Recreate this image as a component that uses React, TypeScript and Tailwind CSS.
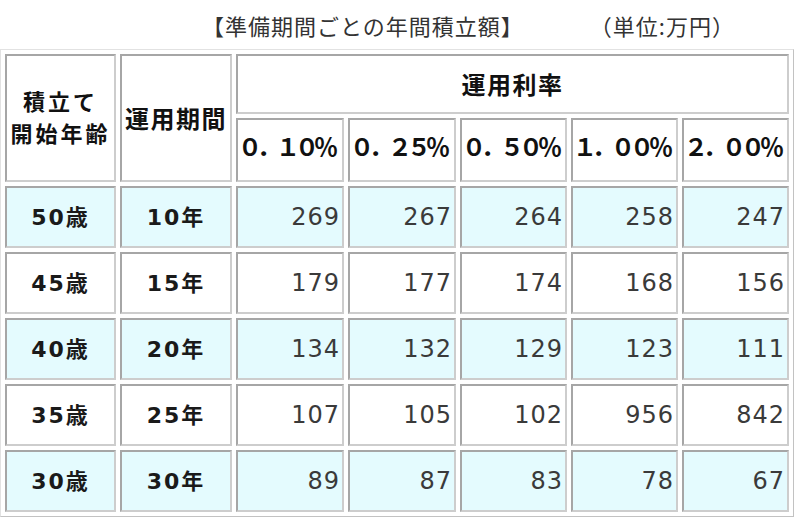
const rates = ["０．１０％", "０．２５％", "０．５０％", "１．００％", "２．００％"];

const rows = [
  { age: "50歳", years: "10年", values: [269, 267, 264, 258, 247] },
  { age: "45歳", years: "15年", values: [179, 177, 174, 168, 156] },
  { age: "40歳", years: "20年", values: [134, 132, 129, 123, 111] },
  { age: "35歳", years: "25年", values: [107, 105, 102, 956, 842] },
  { age: "30歳", years: "30年", values: [89, 87, 83, 78, 67] },
];

const cell =
  "border-2 border-t-[#a6a6a6] border-l-[#a6a6a6] border-r-[#cdcdcd] border-b-[#cdcdcd] p-0 align-middle";

export default function App() {
  return (
    <div className="h-[522px] w-[800px] overflow-hidden bg-white font-['Noto_Sans_CJK_JP',sans-serif] text-[#111]">
      {/* title */}
      <div className="flex h-[49px] items-center pl-[202px] pt-[1px] text-[22px] tracking-[1px] text-[#333]">
        <span>【準備期間ごとの年間積立額】</span>
        <span className="ml-[66px]">（単位:万円）</span>
      </div>

      <table className="w-[794px] table-fixed border-separate border-spacing-[4px] border border-t-[#e2e2e2] border-l-[#e2e2e2] border-r-[#c2c2c2] border-b-[#c2c2c2]">
        <colgroup>
          <col className="w-[111px]" />
          <col className="w-[112px]" />
          <col className="w-[108px]" />
          <col className="w-[108px]" />
          <col className="w-[107px]" />
          <col className="w-[107px]" />
          <col className="w-[107px]" />
        </colgroup>
        <thead>
          <tr>
            <th
              rowSpan={2}
              className={`${cell} pb-[4px] text-center text-[22px] font-bold leading-[32px] tracking-[3px]`}
            >
              <div>積立て</div>
              <div>開始年齢</div>
            </th>
            <th
              rowSpan={2}
              className={`${cell} text-center text-[24px] font-bold tracking-[1.5px]`}
            >
              運用期間
            </th>
            <th
              colSpan={5}
              className={`${cell} h-[60px] text-center text-[24px] font-bold tracking-[1.5px]`}
            >
              運用利率
            </th>
          </tr>
          <tr>
            {rates.map((r) => (
              <th
                key={r}
                className={`${cell} h-[64px] whitespace-nowrap pb-[9px] text-left text-[24px] font-bold tracking-[-5px]`}
              >
                {r}
              </th>
            ))}
          </tr>
        </thead>
        <tbody>
          {rows.map((row, i) => {
            const bg = i % 2 === 0 ? "bg-[#e4fbfe]" : "bg-white";
            return (
              <tr key={row.age}>
                <td
                  className={`${cell} ${bg} h-[62px] text-center font-['DejaVu_Sans','Noto_Sans_CJK_JP',sans-serif] text-[22px] font-bold tracking-[2px] text-[#1a1a1a]`}
                >
                  {row.age}
                </td>
                <td
                  className={`${cell} ${bg} text-center font-['DejaVu_Sans','Noto_Sans_CJK_JP',sans-serif] text-[22px] font-bold tracking-[2px] text-[#1a1a1a]`}
                >
                  {row.years}
                </td>
                {row.values.map((v, j) => (
                  <td
                    key={j}
                    className={`${cell} ${bg} pr-[2px] text-right font-['DejaVu_Sans',sans-serif] text-[24px] tracking-[1px] text-[#3a3a3a]`}
                  >
                    {v}
                  </td>
                ))}
              </tr>
            );
          })}
        </tbody>
      </table>
    </div>
  );
}
